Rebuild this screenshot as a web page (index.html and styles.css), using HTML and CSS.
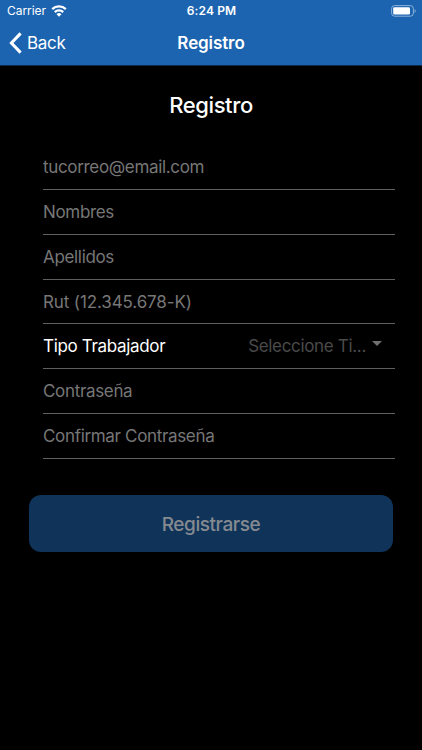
FILE: index.html
```html
<!DOCTYPE html>
<html lang="es">
<head>
<meta charset="utf-8">
<title>Registro</title>
<link rel="stylesheet" href="styles.css">
</head>
<body>
<header class="header">
  <div class="status">
    <div class="carrier"><span class="carrier-name">Carrier</span>
      <svg class="wifi" viewBox="0 0 16 12" width="16" height="12"><g fill="none" stroke="#fff" stroke-width="2.3"><path d="M1.2 4.2a9.8 9.8 0 0 1 13.6 0"/><path d="M3.8 7.1a6.1 6.1 0 0 1 8.4 0"/></g><path fill="#fff" d="M8 11.8 5.5 9.3a3.5 3.5 0 0 1 5 0z"/></svg>
    </div>
    <div class="time">6:24 PM</div>
    <svg class="battery" viewBox="0 0 26 12" width="26" height="12"><rect x="1.6" y=".6" width="21.8" height="10.6" rx="3" fill="none" stroke="#8fb2da" stroke-width="1"/><rect x="3.2" y="2.2" width="16.8" height="7.4" rx="1.4" fill="#fff"/><path fill="#8fb2da" d="M24.6 4.2c1.5.5 1.5 3 0 3.5z"/></svg>
  </div>
  <nav class="nav">
    <a class="back"><svg viewBox="0 0 13 22" width="13" height="22"><path d="M11.6 1.4 2.4 11l9.2 9.6" fill="none" stroke="#fff" stroke-width="3"/></svg><span class="back-label">Back</span></a>
    <div class="nav-title">Registro</div>
  </nav>
</header>
<main class="content">
  <h1 class="title"><span>Registro</span></h1>
  <form class="form">
    <div class="row"><span>tucorreo@email.com</span></div>
    <div class="row"><span>Nombres</span></div>
    <div class="row"><span>Apellidos</span></div>
    <div class="row"><span class="rut">Rut (12.345.678-K)</span></div>
    <div class="row select"><span class="label">Tipo Trabajador</span><span class="value">Seleccione Ti...</span><i class="arrow"></i></div>
    <div class="row"><span>Contraseña</span></div>
    <div class="row"><span>Confirmar Contraseña</span></div>
  </form>
  <button class="submit" type="button" disabled><span>Registrarse</span></button>
</main>
</body>
</html>
```
FILE: styles.css
```css
* { box-sizing: border-box; }
body {
  margin: 0;
  height: 750px;
  overflow: hidden;
  background: #000;
  color: #fff;
  font-family: Inter, "Liberation Sans", sans-serif;
}
svg { display: block; flex: none; }
.header { height: 66px; background: #1c64b0; border-bottom: 1px solid #0b2a4c; }
.status {
  display: grid;
  grid-template-columns: 1fr auto 1fr;
  height: 21px;
  padding: 0 6px 0 7px;
  align-items: center;
}
.carrier { display: flex; gap: 5px; align-items: center; font-size: 12px; letter-spacing: -.05px; }
.time { font-size: 12px; font-weight: 600; letter-spacing: .15px; }
.battery { justify-self: end; }
.nav {
  display: grid;
  grid-template-columns: 1fr auto 1fr;
  height: 44px;
  padding: 0 9px;
  align-items: center;
}
.back { display: flex; gap: 5px; align-items: center; font-size: 17px; letter-spacing: -.3px; }
.nav-title { font-size: 17px; font-weight: 600; letter-spacing: -.1px; }
.content { display: flex; flex-direction: column; }
.title {
  height: 79.4px;
  margin: 0;
  font-size: 22px;
  font-weight: 450;
  line-height: 78px;
  letter-spacing: -.4px;
  text-align: center;
}
.form { margin: 0 27px 0 43px; }
.row {
  display: flex;
  align-items: center;
  height: 44.75px;
  border-bottom: 1px solid #606060;
  color: #777;
  font-size: 17px;
  letter-spacing: -.33px;
  white-space: nowrap;
}
.rut { letter-spacing: -.12px; }
.label { flex: 1; color: #fff; }
.value { color: #4a4a4a; }
.arrow {
  margin: -6px 13px 0 6px;
  border: 5px solid transparent;
  border-top-color: #707070;
  border-bottom: 0;
}
.submit {
  height: 57px;
  margin: 36.4px 29px 0;
  padding: 0;
  border: 0;
  border-radius: 12px;
  background: #103459;
  color: #858a90;
  font: 450 19px Inter, sans-serif;
  letter-spacing: -.42px;
}
.submit span { position: relative; top: 1px; }
```
